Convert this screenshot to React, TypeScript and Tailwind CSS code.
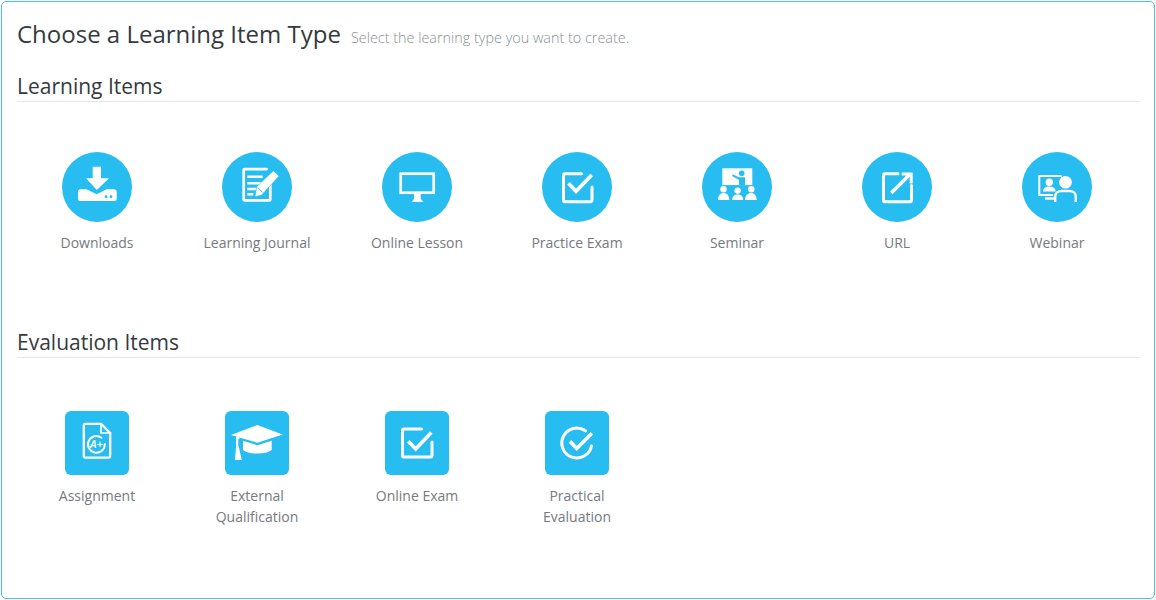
import type { ReactNode } from 'react';

const Stroke = ({ children, w = 2.5 }: { children: ReactNode; w?: number }) => (
  <g fill="none" stroke="#fff" strokeWidth={w} strokeLinecap="round" strokeLinejoin="round">
    {children}
  </g>
);

const checkBox = (
  <Stroke w={3}>
    <path d="M39.500 21.800H23a1.500 1.500 0 0 0-1.500 1.500v24.900a1.500 1.500 0 0 0 1.500 1.500h25.500a1.500 1.500 0 0 0 1.500-1.500V35" />
    <path d="M26.500 31.300l7.500 8L49.700 23" strokeWidth={3.600} strokeLinecap="butt" strokeLinejoin="miter" />
  </Stroke>
);

const learningItems: { label: string; icon: ReactNode }[] = [
  {
    label: 'Downloads',
    icon: (
      <>
        <path d="M30.700 14.700h8.300v11.600h8L34.800 38 24 26.300h6.700z" fill="#fff" />
        <path d="M19 37.300h5.500l10.200 5 9.800-5h7.500a2.500 2.500 0 0 1 2.700 2.500v6.700a2.500 2.500 0 0 1-2.500 2.500H18.500a2.500 2.500 0 0 1-2.500-2.500v-6.700a2.500 2.500 0 0 1 3-2.500z" fill="#fff" />
        <circle cx="44" cy="44.700" r="1.400" fill="#27bdf0" />
        <circle cx="49" cy="44.700" r="1.400" fill="#27bdf0" />
      </>
    ),
  },
  {
    label: 'Learning Journal',
    icon: (
      <>
        <Stroke w={2.700}>
          <path d="M44.500 17.100H22.500a.8.8 0 0 0-.8.8v29.600a.8.8 0 0 0 .8.8h25a.8.8 0 0 0 .8-.8V33" />
        </Stroke>
        <path d="M25.300 23.400h15.400v2.600H25.300zM25.300 30h15.400v2.600H25.300zM25.300 35.700h9.500v2.600h-9.500zM25.300 41h6v2.600h-6z" fill="#fff" />
        <path d="M33 44.700l1.700-10L51.300 18.700l5.700 5.300-17.300 19z" fill="#fff" stroke="#27bdf0" strokeWidth="0.600" />
        <path d="M35.800 35.500l4.800 5" stroke="#27bdf0" strokeWidth="1" fill="none" />
      </>
    ),
  },
  {
    label: 'Online Lesson',
    icon: (
      <>
        <rect x="18.700" y="21.700" width="33" height="19" fill="none" stroke="#fff" strokeWidth="2.700" />
        <path d="M32 42h6.700v4.800l2.600 3.200H29.700l2.300-3.200z" fill="#fff" />
      </>
    ),
  },
  { label: 'Practice Exam', icon: checkBox },
  {
    label: 'Seminar',
    icon: (
      <>
        <rect x="20.300" y="16.300" width="30" height="16.800" fill="#fff" />
        <circle cx="39.700" cy="21.300" r="2.800" fill="#27bdf0" />
        <path d="M30.700 22.300l6 3h6.300v7.900h-6v-5.300l-6.800-3.900z" fill="#27bdf0" />
        <circle cx="21.500" cy="37.300" r="3.200" fill="#fff" />
        <circle cx="35.600" cy="38.600" r="3.200" fill="#fff" />
        <circle cx="49.300" cy="37.300" r="3.200" fill="#fff" />
        <path d="M16 48c0-4.500 2.400-7 5.600-7s5.700 2.500 5.700 7zM30.200 48c0-3.600 2.200-5.600 5.500-5.600s5.600 2 5.600 5.600zM43 48c0-4.500 2.800-7 6-7s5.700 2.500 5.700 7z" fill="#fff" />
      </>
    ),
  },
  {
    label: 'URL',
    icon: (
      <Stroke w={3}>
        <path d="M36 21.800H23a1.500 1.500 0 0 0-1.500 1.500v24.900a1.500 1.500 0 0 0 1.500 1.500h25a1.500 1.500 0 0 0 1.500-1.500V33.500" />
        <path d="M29.300 41L47.500 22.800" strokeWidth={3.400} strokeLinecap="butt" />
        <path d="M39.700 22h9.500v9.500" strokeWidth={3} strokeLinecap="butt" strokeLinejoin="miter" />
      </Stroke>
    ),
  },
  {
    label: 'Webinar',
    icon: (
      <>
        <Stroke w={2}>
          <path d="M39.700 24H17.300v19h13.700" strokeLinecap="butt" strokeLinejoin="miter" />
          <path d="M23 46.500h9" strokeLinecap="butt" strokeWidth={2.400} />
        </Stroke>
        <circle cx="27.300" cy="30.300" r="3.700" fill="#fff" />
        <path d="M21 39.500c0-3.300 2.800-5 6.300-5s6.300 1.700 6.300 5z" fill="#fff" />
        <circle cx="43.500" cy="30.300" r="6.300" fill="#fff" />
        <path d="M33.200 50v-5.500c0-3.600 3-5.500 6-5.500h8.600c3 0 6 1.900 6 5.500V50" fill="#27bdf0" stroke="#fff" strokeWidth="2.400" />
      </>
    ),
  },
];

const evaluationItems: { label: string[]; icon: ReactNode }[] = [
  {
    label: ['Assignment'],
    icon: (
      <>
        <Stroke w={2.300}>
          <path d="M36 12.800H20.300a1.500 1.500 0 0 0-1.500 1.500v30.900a1.500 1.500 0 0 0 1.500 1.500h23.400a1.500 1.500 0 0 0 1.500-1.500V22z" />
          <path d="M36 13v9h9" strokeWidth={1.700} />
          <path d="M36.500 26.700a8.400 8.400 0 1 0 3.300 6.500" strokeWidth={1.900} />
        </Stroke>
        <text x="31.300" y="37" textAnchor="middle" fontSize="11" fontStyle="italic" fontWeight="600" fill="#fff" fontFamily="'Open Sans', sans-serif">
          A+
        </text>
      </>
    ),
  },
  {
    label: ['External', 'Qualification'],
    icon: (
      <>
        <path d="M6 24L32.300 14l25.400 9.500-25.400 8.200-18-5.300v1.800h-2.700v-2.700z" fill="#fff" />
        <path d="M18 29.800l14.300 4.400 14.400-4.400V39c-3 2.500-8 3.500-14.400 3.500S21 41.500 18 39z" fill="#fff" />
        <path d="M12.200 26v10" stroke="#fff" strokeWidth="2.200" fill="none" />
        <path d="M11 35.700h2.800l2.900 13.300H10z" fill="#fff" />
      </>
    ),
  },
  {
    label: ['Online Exam'],
    icon: (
      <Stroke w={3}>
        <path d="M36.500 18H19a1.500 1.500 0 0 0-1.500 1.500v25a1.500 1.500 0 0 0 1.500 1.500h26.500a1.500 1.500 0 0 0 1.500-1.500V31" />
        <path d="M23.300 30.300l7.400 7.700L46.300 21.500" strokeWidth={3.600} strokeLinecap="butt" strokeLinejoin="miter" />
      </Stroke>
    ),
  },
  {
    label: ['Practical', 'Evaluation'],
    icon: (
      <Stroke w={3}>
        <path d="M40.500 19.800A15 15 0 1 0 46.500 35" />
        <path d="M25 30.300l6.700 7.200 15.200-15.200" strokeWidth={3.600} strokeLinecap="butt" strokeLinejoin="miter" />
      </Stroke>
    ),
  },
];

export default function App() {
  return (
    <div className="h-[600px] bg-white p-px font-['Open_Sans',sans-serif]">
      <div className="h-[598px] rounded-[5px] border border-[#4cc4d8] px-[15px]">
        <div className="flex h-[67px] items-baseline pt-[14px]">
          <h1 className="text-[24px] leading-[36px] text-[#343a40]">Choose a Learning Item Type</h1>
          <span className="ml-[10px] text-[14.4px] font-light text-[#8a8f94]">
            Select the learning type you want to create.
          </span>
        </div>

        <h2 className="h-[33px] w-[1122px] border-b border-[#e5e5e5] text-[21px] leading-[34px] text-[#343a40]">
          Learning Items
        </h2>
        <div className="flex pt-[50px]">
          {learningItems.map((item) => (
            <div key={item.label} className="flex w-[160px] flex-col items-center">
              <div className="h-[70px] w-[70px] rounded-full bg-[#27bdf0]">
                <svg viewBox="0 0 70 70" className="h-[70px] w-[70px]">
                  {item.icon}
                </svg>
              </div>
              <div className="mt-[10px] text-center text-[14px] leading-[21px] text-[#767a80]">{item.label}</div>
            </div>
          ))}
        </div>

        <h2 className="mt-[71px] h-[34px] w-[1122px] border-b border-[#e5e5e5] text-[21px] leading-[36px] text-[#343a40]">
          Evaluation Items
        </h2>
        <div className="flex pt-[53px]">
          {evaluationItems.map((item) => (
            <div key={item.label[0]} className="flex w-[160px] flex-col items-center">
              <div className="h-[64px] w-[64px] rounded-[6px] bg-[#27bdf0]">
                <svg viewBox="0 0 64 64" className="h-[64px] w-[64px]">
                  {item.icon}
                </svg>
              </div>
              <div className="mt-[10px] text-center text-[14px] leading-[21px] text-[#767a80]">
                {item.label.map((line) => (
                  <div key={line}>{line}</div>
                ))}
              </div>
            </div>
          ))}
        </div>
      </div>
    </div>
  );
}
